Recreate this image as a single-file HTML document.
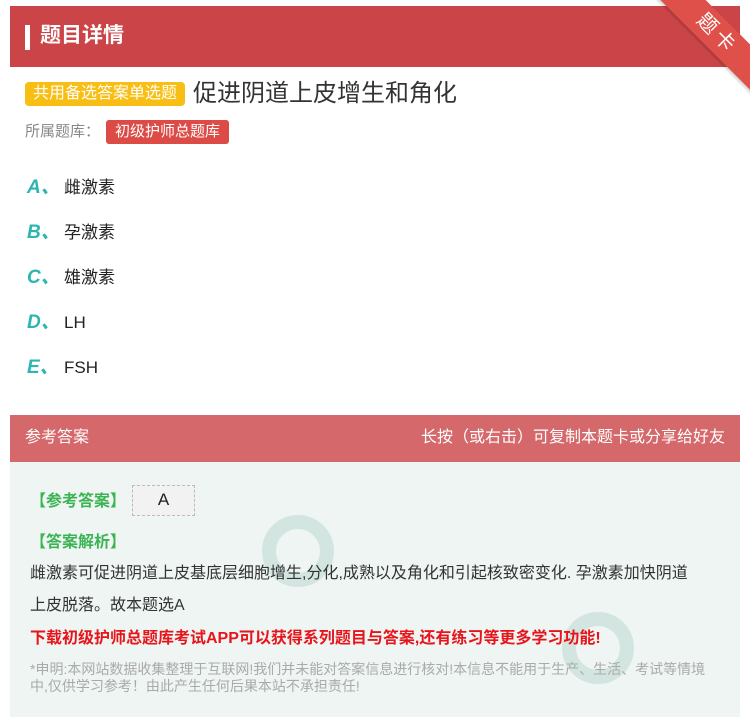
<!DOCTYPE html>
<html><head><meta charset="utf-8"><style>
*{margin:0;padding:0;box-sizing:border-box}
body{width:750px;height:717px;background:#fff;font-family:"Liberation Sans","Noto Sans CJK SC",sans-serif;position:relative;overflow:hidden}
.hd{position:absolute;left:10px;top:6px;width:730px;height:61px;background:#cb4548}
.hd .bar{position:absolute;left:15px;top:19px;width:5px;height:25px;background:#fff}
.hd .t{position:absolute;left:30px;top:15px;color:#fff;font-size:21px;font-weight:bold;line-height:30px}
.rib{position:absolute;right:-42px;top:18px;width:150px;height:32px;background:#e0504a;transform:rotate(45deg);color:#fff;font-size:20px;text-align:center;line-height:32px;letter-spacing:4px;box-shadow:0 2px 3px rgba(0,0,0,.2)}
.q{position:absolute;left:25px;top:78px;font-size:24px;color:#333;line-height:32px}
.tag{display:inline-block;background:#f9be13;color:#fff;font-size:16px;border-radius:4px;padding:0 8px;line-height:24px;vertical-align:3px;margin-right:8px}
.lib{position:absolute;left:25px;top:120px;font-size:15px;color:#888;line-height:24px}
.lib span{display:inline-block;background:#dc4b46;color:#fff;border-radius:3px;padding:0 9px;line-height:24px;font-size:15px;margin-left:6px}
.opt{position:absolute;left:27px;font-size:17px;color:#222;line-height:24px}
.opt b{color:#2cb5b1;font-style:italic;font-size:19px;display:inline-block;width:37px}
.ah{position:absolute;left:10px;top:415px;width:730px;height:47px;background:#d4686a;color:#fff;font-size:16px;line-height:46px;padding:0 15px}
.ah .r{float:right}
.ab{position:absolute;left:10px;top:462px;width:730px;height:255px;background:#eef5f3}
.g{color:#3cb454;font-size:16px;position:absolute;left:30px;font-weight:bold}
.txt{position:absolute;left:30px;top:558px;width:670px;font-size:16px;color:#333;line-height:32px}
.dl{position:absolute;left:30px;top:624px;font-size:16px;color:#e8141b;font-weight:bold}
.st{position:absolute;left:30px;top:661px;width:690px;font-size:14px;color:#aaa;line-height:17px}
.img{position:absolute;left:132px;top:485px;width:63px;height:31px;background:#f2f2f2;border:1px dashed #bbb;font-size:17px;text-align:center;line-height:28px;color:#222}
.wm{position:absolute;border-radius:50%;border:14px solid rgba(160,200,190,.35)}
</style></head><body>
<div class="hd"><div class="bar"></div><div class="t">题目详情</div></div>
<div class="rib">题卡</div>
<div class="q"><span class="tag">共用备选答案单选题</span>促进阴道上皮增生和角化</div>
<div class="lib">所属题库：<span>初级护师总题库</span></div>
<div class="opt" style="top:176px"><b>A、</b>雌激素</div>
<div class="opt" style="top:221px"><b>B、</b>孕激素</div>
<div class="opt" style="top:266px"><b>C、</b>雄激素</div>
<div class="opt" style="top:311px"><b>D、</b>LH</div>
<div class="opt" style="top:356px"><b>E、</b>FSH</div>
<div class="ah">参考答案<span class="r">长按（或右击）可复制本题卡或分享给好友</span></div>
<div class="ab"></div>
<div class="wm" style="left:262px;top:515px;width:72px;height:72px"></div>
<div class="wm" style="left:562px;top:612px;width:72px;height:72px"></div>
<div class="g" style="top:487px">【参考答案】</div>
<div class="img">A</div>
<div class="g" style="top:528px">【答案解析】</div>
<div class="txt">雌激素可促进阴道上皮基底层细胞增生,分化,成熟以及角化和引起核致密变化. 孕激素加快阴道上皮脱落。故本题选A</div>
<div class="dl">下载初级护师总题库考试APP可以获得系列题目与答案,还有练习等更多学习功能!</div>
<div class="st">*申明:本网站数据收集整理于互联网!我们并未能对答案信息进行核对!本信息不能用于生产、生活、考试等情境中,仅供学习参考！由此产生任何后果本站不承担责任!</div>
</body></html>
